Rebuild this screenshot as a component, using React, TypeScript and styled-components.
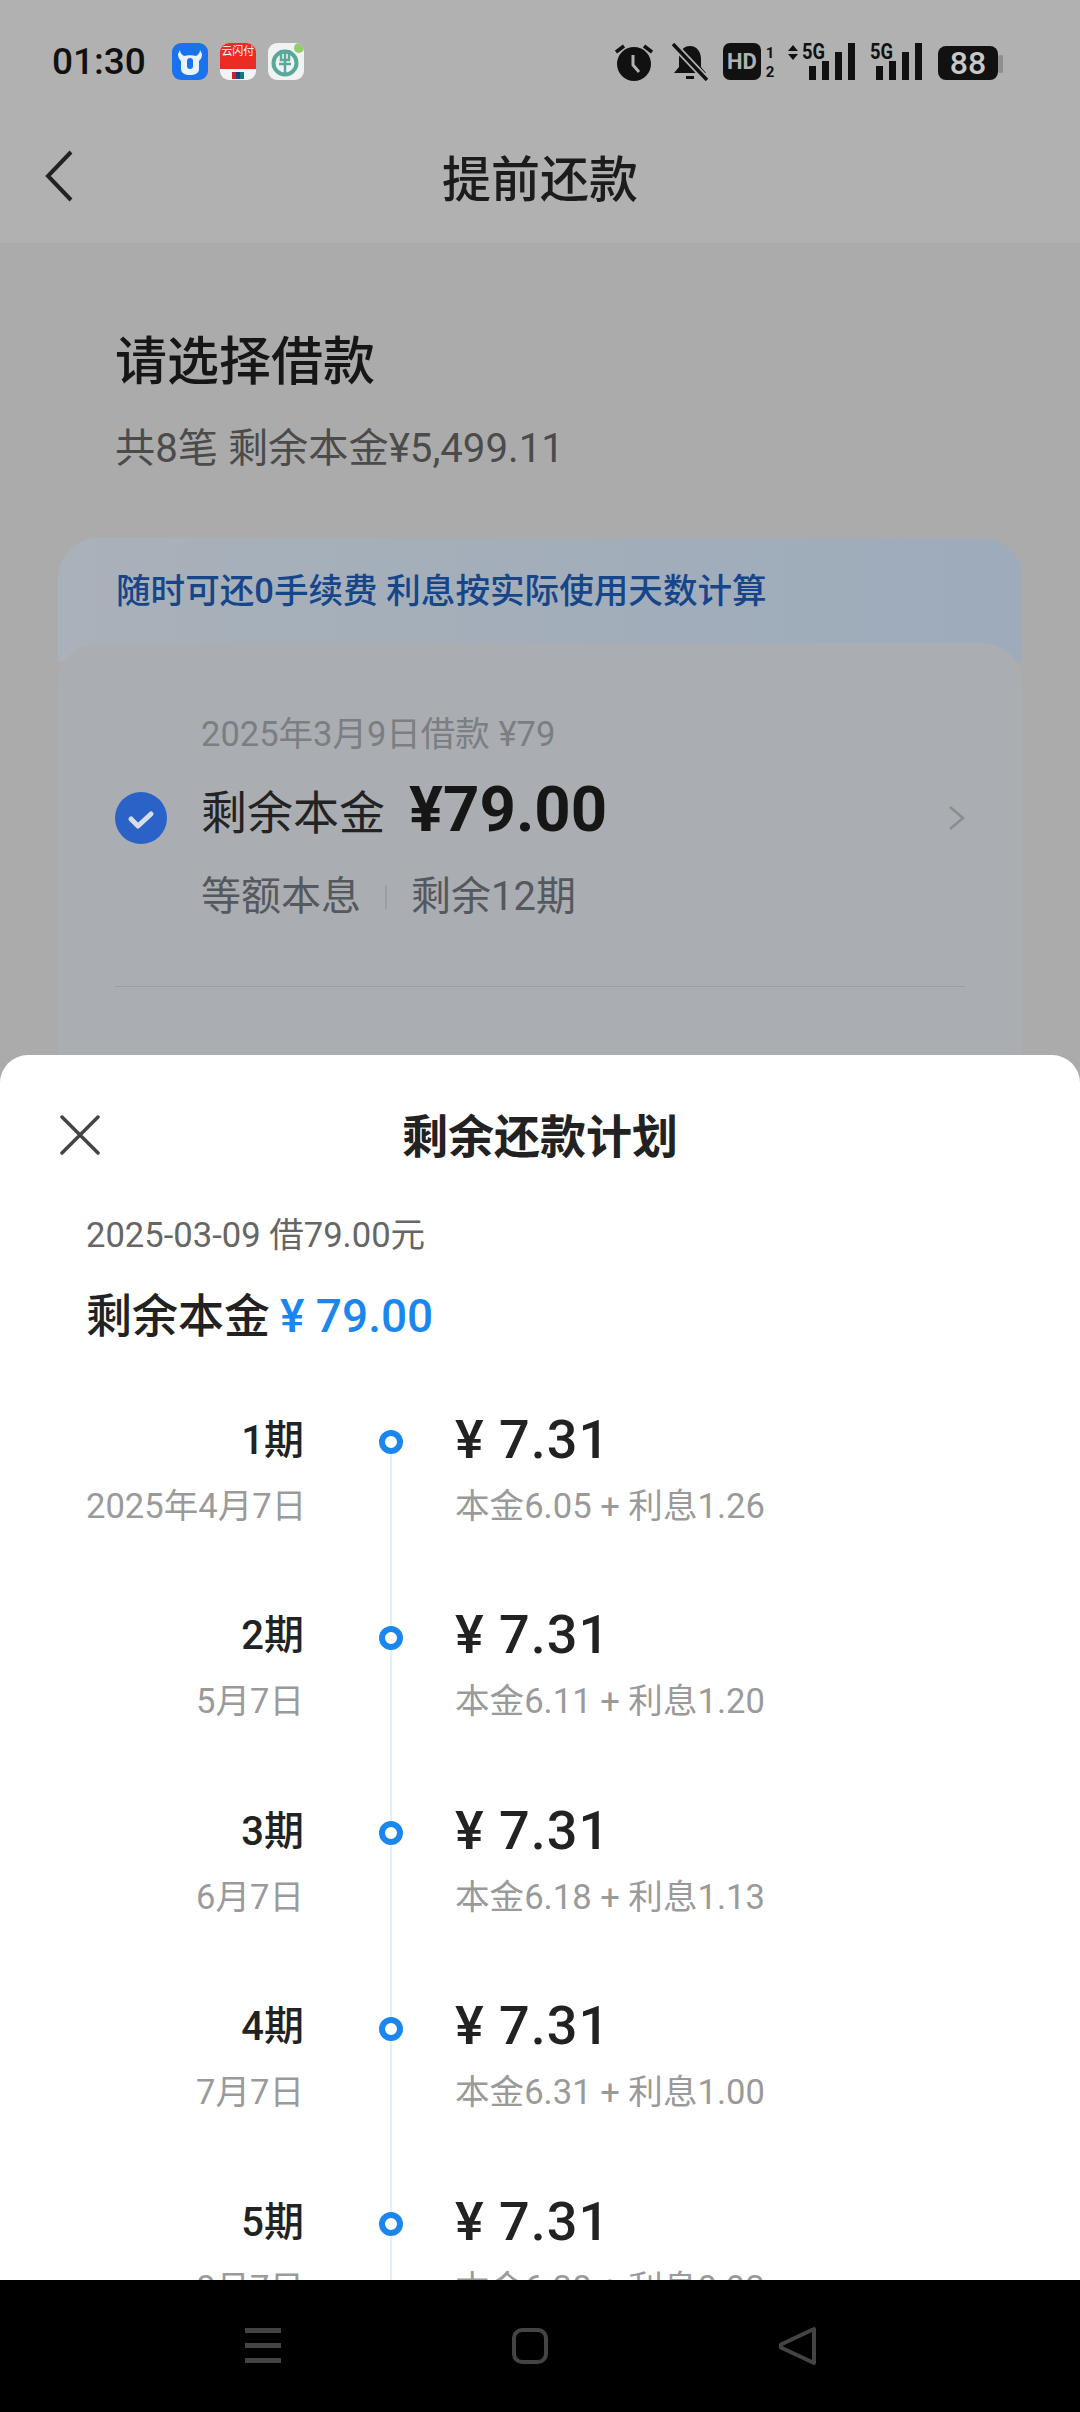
import React from 'react';
import styled, { createGlobalStyle } from 'styled-components';

const CJK = `Roboto, "Noto Sans CJK SC", sans-serif`;

const Global = createGlobalStyle`
  html, body { margin: 0; padding: 0; background: #000; }
  * { box-sizing: border-box; }
`;

const Screen = styled.div`
  position: relative;
  width: 1080px;
  height: 2412px;
  overflow: hidden;
  background: #ababab;
  font-family: ${CJK};
  color: #1b1b1b;
`;

const TopArea = styled.div`
  background: #b1b1b1;
  height: 243px;
  display: flex;
  flex-direction: column;
`;

const StatusBar = styled.div`
  height: 123px;
  padding: 0 76px 0 52px;
  display: flex;
  align-items: center;
  justify-content: space-between;
`;

const StatusGroup = styled.div`
  display: flex;
  align-items: center;
`;

const Time = styled.span`
  font-size: 37px;
  font-weight: 500;
  color: #111;
  margin-right: 26px;
`;

const AppIcon = styled.div<{ $bg: string }>`
  position: relative;
  width: 36px;
  height: 37px;
  border-radius: 9px;
  overflow: hidden;
  background: ${p => p.$bg};
  margin-right: 12px;
  display: flex;
  align-items: center;
  justify-content: center;
`;

const UnionTop = styled.div`
  height: 26px;
  width: 100%;
  background: #ee2a24;
  color: #fff;
  font-size: 11px;
  line-height: 18px;
  text-align: center;
  position: absolute;
  top: 0;
  left: 0;
`;

const NavBar = styled.div`
  position: relative;
  height: 120px;
  display: flex;
  align-items: center;
  justify-content: center;
`;

const BackButton = styled.svg`
  position: absolute;
  left: 44px;
  top: 26px;
`;

const PageTitle = styled.h1`
  margin: 0;
  font-size: 49px;
  font-weight: 500;
  color: #1c1c1c;
  transform: translateY(-8px);
`;

const Intro = styled.div`
  padding: 83px 115px 0;
  height: 295px;
`;

const IntroTitle = styled.div`
  font-size: 52px;
  font-weight: 500;
  line-height: 74px;
  color: #161616;
`;

const IntroSub = styled.div`
  margin-top: 20px;
  font-size: 40.2px;
  line-height: 58px;
  color: #4b4b4b;
`;

const Panel = styled.div`
  margin: 0 58px;
  border-radius: 40px 40px 0 0;
  background: linear-gradient(90deg, #a9b1b9, #9dabbb) top / 100% 124px no-repeat;
  height: 520px;
`;

const PanelNote = styled.div`
  height: 105px;
  padding-left: 58px;
  font-size: 34.6px;
  font-weight: 500;
  line-height: 106px;
  color: #16458a;
`;

const LoanCard = styled.div`
  height: 414px;
  border-radius: 40px 40px 0 0;
  background: #aaaeb2;
  padding: 60px 57px 0;
`;

const LoanBody = styled.div`
  display: grid;
  grid-template-columns: 86px 1fr 18px;
  align-items: center;
  height: 284px;
  border-bottom: 1px solid #999da2;
  padding-bottom: 54px;
`;

const LoanLines = styled.div`
  display: flex;
  flex-direction: column;
`;

const LoanDate = styled.div`
  font-size: 34.5px;
  line-height: 50px;
  color: #7b7e83;
`;

const LoanAmountRow = styled.div`
  display: flex;
  align-items: center;
  margin-top: 9px;
  height: 82px;
`;

const LoanLabel = styled.span`
  font-size: 46px;
  color: #232323;
`;

const LoanAmount = styled.span`
  margin-left: 24px;
  font-size: 63.5px;
  font-weight: 700;
  color: #161616;
`;

const LoanMeta = styled.div`
  display: flex;
  align-items: center;
  margin-top: 18px;
  font-size: 40px;
  line-height: 58px;
  color: #55585c;
`;

const MetaBar = styled.span`
  width: 2px;
  height: 24px;
  background: #9a9ea3;
  margin: 0 24px;
`;

const Sheet = styled.section`
  position: absolute;
  left: 0;
  right: 0;
  top: 1055px;
  bottom: 0;
  background: #fff;
  border-radius: 28px 28px 0 0;
  overflow: hidden;
  padding: 0 86px;
`;

const SheetHead = styled.div`
  position: relative;
  height: 155px;
  display: flex;
  align-items: center;
  justify-content: center;
`;

const CloseIcon = styled.svg`
  position: absolute;
  left: -26px;
  top: 60px;
`;

const SheetTitle = styled.h2`
  margin: 0;
  font-size: 46px;
  font-weight: 700;
  color: #222;
`;

const LoanInfo = styled.div`
  font-size: 34.6px;
  line-height: 50px;
  color: #666;
`;

const Remaining = styled.div`
  margin-top: 23px;
  font-size: 46px;
  font-weight: 500;
  line-height: 66px;
  color: #222;
`;

const RemainingValue = styled.span`
  color: #1b86ee;
  margin-left: 10px;
`;

const Schedule = styled.div`
  margin-top: 62.5px;
`;

const Row = styled.div`
  height: 195.5px;
  display: grid;
  grid-template-columns: 218px 174px 1fr;
  position: relative;
`;

const Left = styled.div`
  text-align: right;
  white-space: nowrap;
`;

const Period = styled.div`
  font-size: 40px;
  line-height: 58px;
  font-weight: 500;
  color: #222;
`;

const DueDate = styled.div`
  margin-top: 11px;
  font-size: 34.6px;
  line-height: 50px;
  color: #9a9a9a;
`;

const Rail = styled.div`
  position: relative;
  &::before {
    content: '';
    position: absolute;
    left: 86px;
    top: 0;
    bottom: 0;
    width: 2px;
    background: #e2eefb;
  }
`;

const RailFirst = styled(Rail)`
  &::before { top: 29px; }
`;

const Dot = styled.span`
  position: absolute;
  left: 75px;
  top: 18.5px;
  width: 24px;
  height: 24px;
  border-radius: 50%;
  border: 6px solid #1b86ee;
  background: #fff;
`;

const Right = styled.div`
  transform: translateX(-23px);
`;

const Amount = styled.div`
  font-size: 54px;
  line-height: 58px;
  font-weight: 500;
  color: #222;
  letter-spacing: 1px;
  transform: translateY(-1.5px);
`;

const Split = styled.div`
  margin-top: 11px;
  font-size: 34.6px;
  line-height: 50px;
  color: #9a9a9a;
`;

const SysNav = styled.nav`
  position: absolute;
  left: 0;
  right: 0;
  bottom: 0;
  height: 132px;
  background: #000;
  display: flex;
  align-items: center;
  gap: 231px;
  padding-left: 245px;
`;

// the 5G label sits a little above the bars, so these two icons are taller than the row
const SignalIcon = styled.svg`
  margin-top: -10px;
`;

const rows = [
  { n: '1期', d: '2025年4月7日', s: '本金6.05 + 利息1.26' },
  { n: '2期', d: '5月7日', s: '本金6.11 + 利息1.20' },
  { n: '3期', d: '6月7日', s: '本金6.18 + 利息1.13' },
  { n: '4期', d: '7月7日', s: '本金6.31 + 利息1.00' },
  { n: '5期', d: '8月7日', s: '本金6.38 + 利息0.93' },
];

const StatusIcons = () => (
  <StatusGroup>
    <svg width="38" height="38" viewBox="0 0 38 38" style={{ marginRight: 18 }}>
      <circle cx="19" cy="21" r="17" fill="#111" />
      <path d="M18 12v10l6 7" stroke="#b1b1b1" strokeWidth="3" fill="none" />
      <path d="M1 9l8-6M37 9l-8-6" stroke="#111" strokeWidth="3.5" />
    </svg>
    <svg width="38" height="38" viewBox="0 0 38 38" style={{ marginRight: 14 }}>
      <path d="M19 3c7 0 11 6 11 13v8l5 6H3l5-6v-8c0-7 4-13 11-13z" fill="#111" />
      <rect x="15" y="33" width="8" height="3" fill="#111" />
      <path d="M2 1l34 36" stroke="#b1b1b1" strokeWidth="7" />
      <path d="M2 1l34 36" stroke="#111" strokeWidth="3.5" />
    </svg>
    <svg width="54" height="38" viewBox="0 0 54 38" style={{ marginRight: 10 }}>
      <rect x="0" y="0" width="38" height="37" rx="7" fill="#111" />
      <text x="19" y="26" textAnchor="middle" fontSize="22" fontWeight="700" fill="#b1b1b1" fontFamily="Roboto">HD</text>
      <text x="47" y="15" textAnchor="middle" fontSize="15" fontWeight="700" fill="#111" fontFamily="Roboto">1</text>
      <text x="47" y="34" textAnchor="middle" fontSize="15" fontWeight="700" fill="#111" fontFamily="Roboto">2</text>
    </svg>
    <SignalIcon width="68" height="48" viewBox="0 -10 68 48" style={{ marginRight: 15 }}>
      <path d="M1 8l5-6 5 6zM1 11l5 6 5-6z" fill="#111" />
      <text x="15" y="16" fontSize="22" fontWeight="700" fill="#111" fontFamily="Roboto" textLength="23" lengthAdjust="spacingAndGlyphs">5G</text>
      <g fill="#111">
        <rect x="22" y="23" width="7" height="14" />
        <rect x="35" y="18" width="7" height="19" />
        <rect x="48" y="9" width="7" height="28" />
        <rect x="61" y="0" width="7" height="37" />
      </g>
    </SignalIcon>
    <SignalIcon width="52" height="48" viewBox="0 -10 52 48" style={{ marginRight: 16 }}>
      <text x="0" y="16" fontSize="22" fontWeight="700" fill="#111" fontFamily="Roboto" textLength="23" lengthAdjust="spacingAndGlyphs">5G</text>
      <g fill="#111">
        <rect x="6" y="23" width="7" height="14" />
        <rect x="19" y="18" width="7" height="19" />
        <rect x="32" y="9" width="7" height="28" />
        <rect x="45" y="0" width="7" height="37" />
      </g>
    </SignalIcon>
    <svg width="66" height="38" viewBox="0 0 66 38">
      <rect x="60" y="12" width="5" height="18" rx="2" fill="#8f8f8f" />
      <rect x="0" y="3" width="60" height="34" rx="8" fill="#111" />
      <text x="30" y="31" textAnchor="middle" fontSize="32" fontWeight="500" fill="#c8c8c8" fontFamily="Roboto">88</text>
    </svg>
  </StatusGroup>
);

export default function App() {
  return (
    <Screen>
      <Global />
      <TopArea>
        <StatusBar>
          <StatusGroup>
            <Time>01:30</Time>
            <AppIcon $bg="#1a73ee">
              <svg width="28" height="30" viewBox="0 0 28 30">
                <path d="M4 3c0 3 2 5 4 6 3-1 9-1 12 0 2-1 4-3 4-6l2 4c0 3-1 5-3 7v8c0 4-4 6-9 6s-9-2-9-6v-8C3 12 2 10 2 7z" fill="#e9f2ff" />
                <rect x="11" y="11" width="6" height="11" rx="3" fill="#1a73ee" />
              </svg>
            </AppIcon>
            <AppIcon $bg="#f4f4f4">
              <UnionTop>云闪付</UnionTop>
              <svg width="12" height="7" viewBox="0 0 12 7" style={{ position: 'absolute', bottom: 1, left: 12 }}>
                <rect x="0" width="4" height="7" fill="#c8202c" />
                <rect x="4" width="4" height="7" fill="#1c3f7c" />
                <rect x="8" width="4" height="7" fill="#107a80" />
              </svg>
            </AppIcon>
            <AppIcon $bg="#f2f2f2">
              <svg width="36" height="37" viewBox="0 0 36 37">
                <circle cx="17" cy="20" r="11.5" fill="none" stroke="#58a99a" strokeWidth="4" />
                <path d="M17 7v25M13 7v10h8V7M11 21h12" fill="none" stroke="#58a99a" strokeWidth="2.5" />
                <circle cx="31" cy="5" r="5" fill="#8fce6a" />
              </svg>
            </AppIcon>
          </StatusGroup>
          <StatusIcons />
        </StatusBar>
        <NavBar>
          <BackButton width="32" height="54" viewBox="0 0 32 54">
            <path d="M27 3L4 27l23 24" fill="none" stroke="#222" strokeWidth="4" />
          </BackButton>
          <PageTitle>提前还款</PageTitle>
        </NavBar>
      </TopArea>

      <Intro>
        <IntroTitle>请选择借款</IntroTitle>
        <IntroSub>共8笔 剩余本金¥5,499.11</IntroSub>
      </Intro>

      <Panel>
        <PanelNote>随时可还0手续费 利息按实际使用天数计算</PanelNote>
        <LoanCard>
          <LoanBody>
            <svg width="52" height="52" viewBox="0 0 52 52">
              <circle cx="26" cy="26" r="26" fill="#2a62c8" />
              <path d="M16 27l7 7 13-12" fill="none" stroke="#d8dee8" strokeWidth="5" strokeLinecap="round" strokeLinejoin="round" />
            </svg>
            <LoanLines>
              <LoanDate>2025年3月9日借款 ¥79</LoanDate>
              <LoanAmountRow>
                <LoanLabel>剩余本金</LoanLabel>
                <LoanAmount>¥79.00</LoanAmount>
              </LoanAmountRow>
              <LoanMeta>
                等额本息<MetaBar />剩余12期
              </LoanMeta>
            </LoanLines>
            <svg width="18" height="26" viewBox="0 0 18 26">
              <path d="M3 2l13 11L3 24" fill="none" stroke="#8a8d90" strokeWidth="2.5" />
            </svg>
          </LoanBody>
        </LoanCard>
      </Panel>

      <Sheet>
        <SheetHead>
          <CloseIcon width="40" height="40" viewBox="0 0 40 40">
            <path d="M2 2l36 36M38 2L2 38" stroke="#444" strokeWidth="3.5" strokeLinecap="round" />
          </CloseIcon>
          <SheetTitle>剩余还款计划</SheetTitle>
        </SheetHead>
        <LoanInfo>2025-03-09 借79.00元</LoanInfo>
        <Remaining>
          剩余本金<RemainingValue>¥ 79.00</RemainingValue>
        </Remaining>
        <Schedule>
          {rows.map((r, i) => {
            const RailEl = i === 0 ? RailFirst : Rail;
            return (
              <Row key={r.n}>
                <Left>
                  <Period>{r.n}</Period>
                  <DueDate>{r.d}</DueDate>
                </Left>
                <RailEl>
                  <Dot />
                </RailEl>
                <Right>
                  <Amount>¥ 7.31</Amount>
                  <Split>{r.s}</Split>
                </Right>
              </Row>
            );
          })}
        </Schedule>
      </Sheet>

      <SysNav>
        <svg width="36" height="36" viewBox="0 0 36 36" fill="#444">
          <rect y="0" width="36" height="5" />
          <rect y="15" width="36" height="5" />
          <rect y="30" width="36" height="5" />
        </svg>
        <svg width="36" height="36" viewBox="0 0 36 36">
          <rect x="2" y="2" width="32" height="32" rx="8" fill="none" stroke="#444" strokeWidth="4" />
        </svg>
        <svg width="38" height="40" viewBox="0 0 38 40">
          <path d="M35 3v34L3 22c-2-1-2-3 0-4z" fill="none" stroke="#444" strokeWidth="4" strokeLinejoin="round" />
        </svg>
      </SysNav>
    </Screen>
  );
}
